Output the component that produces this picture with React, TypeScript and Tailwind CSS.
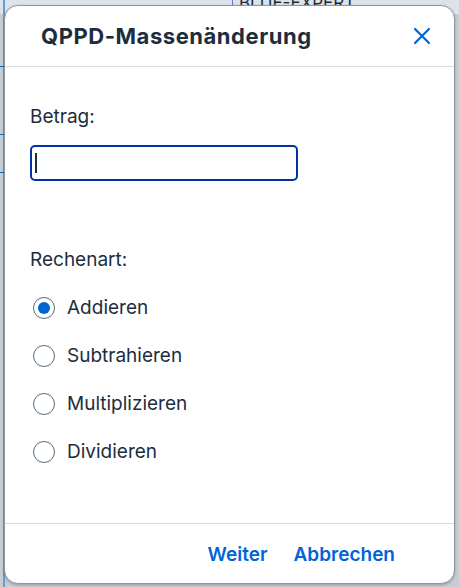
import React from 'react';

/* ════════════════════════════════════════════
   Radio option row
   ════════════════════════════════════════════ */

interface RadioRowProps {
    label: string;
    checked?: boolean;
}

function RadioRow({ label, checked = false }: RadioRowProps) {
    return (
        <div className="flex items-center h-[48px]">
            <div className="w-[22px] h-[22px] rounded-full border-[1.5px] border-[#556b82] flex items-center justify-center ml-[3px] bg-white">
                {checked && <div className="w-[12px] h-[12px] rounded-full bg-[#0064d9]" />}
            </div>
            <span className="ml-[12px] text-[19px] text-[#1d2d3e]">{label}</span>
        </div>
    );
}

/* ════════════════════════════════════════════
   Dialog
   ════════════════════════════════════════════ */

export default function App() {
    return (
        <div
            className="relative w-[459px] h-[587px] overflow-hidden bg-[#c8cdd2]"
            style={{ fontFamily: 'Inter, "Noto Sans", sans-serif' }}
        >
            {/* page behind the overlay */}
            <div className="absolute left-0 top-0 w-[459px] h-[14px] bg-[#dde3ea]" />
            <div className="absolute left-[232px] top-[-7px] h-[20px] border-l border-[#5a7fbf] pl-[6px] text-[17px] leading-[20px] text-[#1d2d3e]">
                BLUE-EXPERT
            </div>
            <div className="absolute left-[3px] top-0 w-[2px] h-[587px] bg-[#6b9ad8]" />
            <div className="absolute left-0 top-[66px] w-[6px] h-px bg-[#0a64d0]" />
            <div className="absolute left-0 top-[134px] w-[6px] h-px bg-[#0a64d0]" />
            <div className="absolute left-0 top-[172px] w-[6px] h-px bg-[#0a64d0]" />

            <div className="absolute left-[4px] top-[5px] w-[451px] h-[579px] bg-white rounded-[14px] border border-[#8d96a0] shadow-[0_1px_3px_rgba(0,0,0,0.25)] flex flex-col overflow-hidden">
                {/* Header */}
                <div className="h-[61px] flex items-center justify-between pl-[36px] pr-[20px] border-b border-[#d9dde1] shrink-0">
                    <h1 className="text-[22px] font-bold text-[#1d2d3e] tracking-[0.55px]">QPPD-Massenänderung</h1>
                    <svg width="18" height="18" viewBox="0 0 18 18" className="mr-[3px]">
                        <path d="M2 2 L16 16 M16 2 L2 16" stroke="#0064d9" strokeWidth="2.2" strokeLinecap="round" />
                    </svg>
                </div>

                {/* Body */}
                <div className="flex-1 pl-[25px] pt-[37px]">
                    <div className="text-[19px] text-[#1d2d3e] leading-[26px]">Betrag:</div>
                    <div className="mt-[15px] w-[268px] h-[36px] rounded-[5px] border-[2.5px] border-[#0032a5] flex items-center pl-[3px]">
                        <div className="w-[2px] h-[20px] bg-[#1d2d3e]" />
                    </div>

                    <div className="mt-[66px] text-[19px] text-[#1d2d3e] leading-[26px]">Rechenart:</div>
                    <div className="mt-[11px] flex flex-col">
                        <RadioRow label="Addieren" checked />
                        <RadioRow label="Subtrahieren" />
                        <RadioRow label="Multiplizieren" />
                        <RadioRow label="Dividieren" />
                    </div>
                </div>

                {/* Footer */}
                <div className="h-[60px] border-t border-[#d9dde1] flex items-center justify-end gap-[26px] pr-[59px] pt-[3px] shrink-0">
                    <span className="text-[19px] font-semibold text-[#0064d9]">Weiter</span>
                    <span className="text-[19px] font-semibold text-[#0064d9]">Abbrechen</span>
                </div>
            </div>
        </div>
    );
}
